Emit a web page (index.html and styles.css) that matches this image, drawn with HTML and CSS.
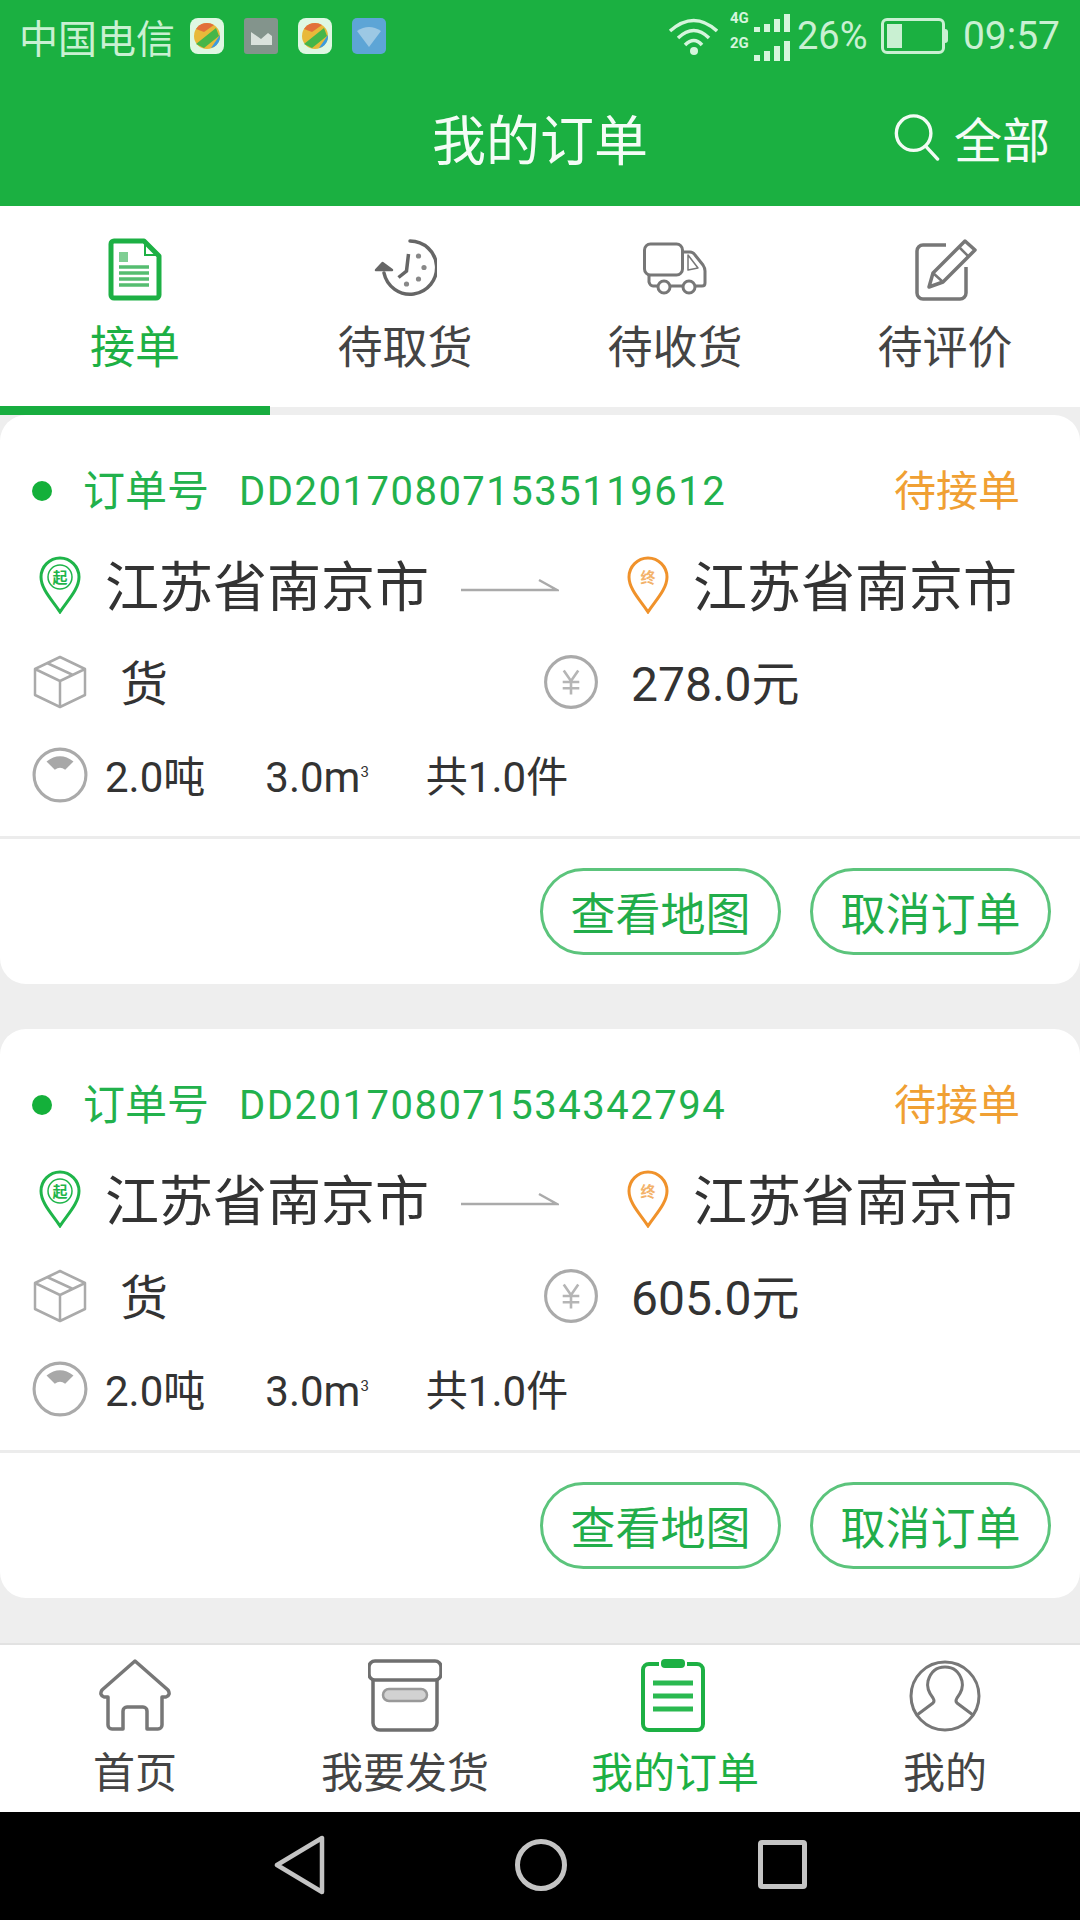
FILE: index.html
```html
<!DOCTYPE html>
<html lang="zh-CN">
<head>
    <meta charset="UTF-8">
    <meta name="viewport" content="width=device-width, initial-scale=1.0">
    <title>我的订单</title>
    <link rel="stylesheet" href="styles.css">
</head>
<body>
    <!-- Shared icons for the order cards -->
    <svg class="icon-defs" aria-hidden="true">
        <symbol id="pin-start" viewBox="0 0 44 58">
            <path d="M22 56 C14 44 3 33 3 21 A19 19 0 0 1 41 21 C41 33 30 44 22 56 Z" fill="none" stroke="#1fb54a" stroke-width="3"/>
            <circle cx="22" cy="21" r="12" fill="none" stroke="#1fb54a" stroke-width="1.5"/>
            <text x="22" y="27" class="pin-text" fill="#1fb54a">起</text>
        </symbol>
        <symbol id="pin-end" viewBox="0 0 44 58">
            <path d="M22 56 C14 44 3 33 3 21 A19 19 0 0 1 41 21 C41 33 30 44 22 56 Z" fill="none" stroke="#f0922b" stroke-width="3"/>
            <text x="22" y="27" class="pin-text" fill="#f3b26a">终</text>
        </symbol>
        <symbol id="box" viewBox="0 0 56 56">
            <path d="M28 3 L53 15 V41 L28 53 L3 41 V15 Z M3 15 L28 27 L53 15 M28 27 V53 M15 9 L41 21" fill="none" stroke="#aaa" stroke-width="2.5" stroke-linejoin="round"/>
        </symbol>
        <symbol id="coin" viewBox="0 0 54 54">
            <circle cx="27" cy="27" r="24.5" fill="none" stroke="#aaa" stroke-width="3"/>
            <path d="M20 16 L27 26 L34 16 M27 26 V39 M19 27 H35 M19 33 H35" fill="none" stroke="#b5b5b5" stroke-width="2.5"/>
        </symbol>
        <symbol id="scale" viewBox="0 0 54 54">
            <circle cx="27" cy="27" r="25" fill="none" stroke="#aaa" stroke-width="3"/>
            <path d="M14 14 Q27 4 40 14 L32 22 Q27 18 22 22 Z" fill="#a8a8a8"/>
        </symbol>
    </svg>

    <div class="top-bar">
        <div class="status-bar">
            <span class="carrier">中国电信</span>
            <svg class="notify-icon" viewBox="0 0 34 36">
                <rect width="34" height="36" rx="8" fill="#dff7e2"/>
                <circle cx="17" cy="18" r="13" fill="#e8b93a"/>
                <path d="M6 11 A13 13 0 0 1 24 7 L14 14 Z" fill="#e2703a"/>
                <path d="M6 26 L26 10 L29 18 L14 30 Z" fill="#45b649"/>
                <path d="M21 30 L30 17 A13 13 0 0 1 24 29 Z" fill="#3a9be0"/>
            </svg>
            <svg class="notify-icon" viewBox="0 0 34 36">
                <rect width="34" height="36" rx="3" fill="#83948c"/>
                <path d="M7 25 L7 14 L17 21 L24 15 L28 18 V27 H7 Z" fill="#d9e2dc"/>
            </svg>
            <svg class="notify-icon" viewBox="0 0 34 36">
                <rect width="34" height="36" rx="8" fill="#dff7e2"/>
                <circle cx="17" cy="18" r="13" fill="#e8b93a"/>
                <path d="M6 11 A13 13 0 0 1 24 7 L14 14 Z" fill="#e2703a"/>
                <path d="M6 26 L26 10 L29 18 L14 30 Z" fill="#45b649"/>
                <path d="M21 30 L30 17 A13 13 0 0 1 24 29 Z" fill="#3a9be0"/>
            </svg>
            <svg class="notify-icon" viewBox="0 0 34 36">
                <rect width="34" height="36" rx="5" fill="#5da5d6"/>
                <path d="M5 13 Q17 5 29 13 L17 29 Z" fill="#9cc8e4"/>
            </svg>
            <span class="status-gap"></span>
            <svg class="wifi" viewBox="0 0 50 40">
                <g fill="none" stroke="#d5f5dc" stroke-width="3.5">
                    <path d="M2 15 Q26 -6 49 15"/>
                    <path d="M10 22 Q26 7 41 22"/>
                    <path d="M17 29 Q26 20 34 29"/>
                </g>
                <circle cx="26" cy="35" r="4" fill="#d5f5dc"/>
            </svg>
            <svg class="signal" viewBox="0 0 60 52">
                <text x="0" y="13" class="net-text">4G</text>
                <text x="0" y="38" class="net-text">2G</text>
                <g fill="#d5f5dc">
                    <rect x="24" y="17" width="6" height="5"/><rect x="34" y="14" width="6" height="8"/><rect x="44" y="9" width="6" height="13"/><rect x="54" y="4" width="6" height="18"/>
                    <rect x="24" y="45" width="6" height="6"/><rect x="34" y="41" width="6" height="10"/><rect x="44" y="36" width="6" height="15"/><rect x="54" y="31" width="6" height="20"/>
                </g>
            </svg>
            <span class="battery-level">26%</span>
            <span class="battery"><span class="battery-fill"></span></span>
            <span class="clock">09:57</span>
        </div>
        <header class="title-bar">
            <h1>我的订单</h1>
            <div class="filter">
                <svg class="search-icon" viewBox="0 0 48 50">
                    <circle cx="21" cy="21" r="18" fill="none" stroke="#f2fbf4" stroke-width="3.5"/>
                    <path d="M34 35 L46 48" stroke="#f2fbf4" stroke-width="3.5" stroke-linecap="round"/>
                </svg>
                <span>全部</span>
            </div>
        </header>
    </div>

    <nav class="tabs">
        <div class="tab active">
            <svg class="tab-icon" viewBox="0 0 64 64">
                <path d="M11 4 H41 L56 19 V58 A3 3 0 0 1 53 61 H11 A3 3 0 0 1 8 58 V7 A3 3 0 0 1 11 4 Z" fill="none" stroke="#1db044" stroke-width="5" stroke-linejoin="round"/>
                <path d="M42 6 V18 H54" fill="none" stroke="#1db044" stroke-width="2"/>
                <rect x="16" y="15" width="9" height="10" fill="#7fce93"/>
                <path d="M16 30 H46 M16 36 H46 M16 42 H46 M16 48 H46" stroke="#55bd70" stroke-width="3.5"/>
            </svg>
            <span>接单</span>
        </div>
        <div class="tab">
            <svg class="tab-icon" viewBox="0 0 64 64">
                <path d="M37 4 A26.6 26.6 0 1 1 11 36" fill="none" stroke="#666" stroke-width="3.5" stroke-linecap="round"/>
                <path d="M9.5 26 L3 33 H19 Z" fill="#666" stroke="#666" stroke-width="2.5" stroke-linejoin="round"/>
                <path d="M35.5 17 L33.5 34 L25.5 40.5" fill="none" stroke="#666" stroke-width="3.5"/>
                <g fill="#888"><circle cx="45.5" cy="19" r="2.6"/><circle cx="51" cy="30.5" r="2.6"/><circle cx="45.5" cy="42" r="2.6"/><circle cx="33.5" cy="47" r="2.6"/></g>
            </svg>
            <span>待取货</span>
        </div>
        <div class="tab">
            <svg class="tab-icon" viewBox="0 0 64 64">
                <g fill="none" stroke="#777" stroke-width="3" stroke-linejoin="round">
                    <rect x="1.5" y="7" width="38" height="31" rx="6"/>
                    <path d="M41 15 H47 Q50 15 52 18 L60 28 Q62 31 62 34 V46 Q62 49 59 49 H53 M39 49 H28 M14 49 H10 Q7 49 6 45 L6 38"/>
                    <path d="M45 18 L55 31 L45 33 Z" stroke-width="1.5"/>
                    <circle cx="21" cy="50" r="6"/>
                    <circle cx="46" cy="50" r="6"/>
                </g>
            </svg>
            <span>待收货</span>
        </div>
        <div class="tab">
            <svg class="tab-icon" viewBox="0 0 64 64">
                <g fill="none" stroke="#777" stroke-width="3.5" stroke-linejoin="round">
                    <path d="M33 8 H10 A6 6 0 0 0 4 14 V56 A6 6 0 0 0 10 62 H47 A6 6 0 0 0 53 56 V30"/>
                    <path d="M16 50 L20 36 L52 4 L62 13 L30 45 Z"/>
                    <path d="M46 10 L56 20 M20 36 L30 45" stroke-width="2.5"/>
                </g>
            </svg>
            <span>待评价</span>
        </div>
    </nav>

    <main class="orders">
        <article class="order-card">
            <div class="order-info">
                <div class="row order-head">
                    <i class="dot"></i>
                    <span class="order-label">订单号</span>
                    <span class="order-no">DD201708071535119612</span>
                    <span class="order-state">待接单</span>
                </div>
                <div class="row route">
                    <svg class="pin"><use href="#pin-start"/></svg>
                    <span class="city">江苏省南京市</span>
                    <svg class="arrow" viewBox="0 0 98 20"><path d="M0 13 H96 L78 3" fill="none" stroke="#aaa" stroke-width="2.5"/></svg>
                    <svg class="pin pin-to"><use href="#pin-end"/></svg>
                    <span class="city">江苏省南京市</span>
                </div>
                <div class="row goods">
                    <div class="goods-name">
                        <svg class="goods-icon"><use href="#box"/></svg>
                        <span class="goods-type">货</span>
                    </div>
                    <svg class="goods-icon"><use href="#coin"/></svg>
                    <span class="price">278.0元</span>
                </div>
                <div class="row amounts">
                    <svg class="goods-icon"><use href="#scale"/></svg>
                    <span>2.0吨</span>
                    <span>3.0m<sup>3</sup></span>
                    <span>共1.0件</span>
                </div>
            </div>
            <div class="order-actions">
                <button class="pill">查看地图</button>
                <button class="pill">取消订单</button>
            </div>
        </article>

        <article class="order-card">
            <div class="order-info">
                <div class="row order-head">
                    <i class="dot"></i>
                    <span class="order-label">订单号</span>
                    <span class="order-no">DD201708071534342794</span>
                    <span class="order-state">待接单</span>
                </div>
                <div class="row route">
                    <svg class="pin"><use href="#pin-start"/></svg>
                    <span class="city">江苏省南京市</span>
                    <svg class="arrow" viewBox="0 0 98 20"><path d="M0 13 H96 L78 3" fill="none" stroke="#aaa" stroke-width="2.5"/></svg>
                    <svg class="pin pin-to"><use href="#pin-end"/></svg>
                    <span class="city">江苏省南京市</span>
                </div>
                <div class="row goods">
                    <div class="goods-name">
                        <svg class="goods-icon"><use href="#box"/></svg>
                        <span class="goods-type">货</span>
                    </div>
                    <svg class="goods-icon"><use href="#coin"/></svg>
                    <span class="price">605.0元</span>
                </div>
                <div class="row amounts">
                    <svg class="goods-icon"><use href="#scale"/></svg>
                    <span>2.0吨</span>
                    <span>3.0m<sup>3</sup></span>
                    <span>共1.0件</span>
                </div>
            </div>
            <div class="order-actions">
                <button class="pill">查看地图</button>
                <button class="pill">取消订单</button>
            </div>
        </article>
    </main>

    <nav class="bottom-nav">
        <div class="nav-item">
            <svg class="nav-icon" viewBox="0 0 74 74">
                <path d="M25 70 H14 A4 4 0 0 1 10 66 V38 H6 Q1 36 4 31 L37 2 L70 31 Q73 36 68 38 H64 V66 A4 4 0 0 1 60 70 H49 V52 A4 4 0 0 0 45 48 H29 A4 4 0 0 0 25 52 Z" fill="none" stroke="#777" stroke-width="3.5" stroke-linejoin="round"/>
            </svg>
            <span>首页</span>
        </div>
        <div class="nav-item">
            <svg class="nav-icon" viewBox="0 0 74 74">
                <g fill="none" stroke="#6f6f6f" stroke-width="3.5">
                    <rect x="1" y="2" width="72" height="19" rx="6"/>
                    <path d="M5 21 V64 A7 7 0 0 0 12 71 H62 A7 7 0 0 0 69 64 V21"/>
                    <rect x="15" y="30" width="44" height="12" rx="6" fill="#d2d2d2" stroke="#999" stroke-width="2.5"/>
                </g>
            </svg>
            <span>我要发货</span>
        </div>
        <div class="nav-item active">
            <svg class="nav-icon" viewBox="0 0 74 74">
                <path d="M21 5 H11 A6 6 0 0 0 5 11 V65 A6 6 0 0 0 11 71 H59 A6 6 0 0 0 65 65 V11 A6 6 0 0 0 59 5 H49" fill="none" stroke="#1db044" stroke-width="4"/>
                <rect x="23" y="0" width="24" height="9" rx="4" fill="#1db044"/>
                <path d="M15 24 H55 M15 37 H55 M15 50 H55" stroke="#2ab950" stroke-width="5"/>
            </svg>
            <span>我的订单</span>
        </div>
        <div class="nav-item">
            <svg class="nav-icon" viewBox="0 0 74 74">
                <g fill="none" stroke="#777" stroke-width="3">
                    <circle cx="37" cy="37" r="34"/>
                    <path d="M9 56 L25 44 Q27 42 25 39 Q18 30 20 22 Q24 8 37 8 Q50 8 54 22 Q56 30 49 39 Q47 42 49 44 L65 56"/>
                </g>
            </svg>
            <span>我的</span>
        </div>
    </nav>

    <div class="system-bar">
        <svg class="sys-back" viewBox="0 0 52 60"><path d="M3 30 L48 3 V57 Z" fill="none" stroke="#c4c4c4" stroke-width="4.5" stroke-linejoin="round"/></svg>
        <span class="sys-home"></span>
        <span class="sys-recent"></span>
    </div>
</body>
</html>
```

FILE: styles.css
```css
* {
    box-sizing: border-box;
}

body {
    margin: 0;
    width: 1080px;
    height: 1920px;
    display: flex;
    flex-direction: column;
    overflow: hidden;
    background: #eeeeee;
    color: #333333;
    font-family: Roboto, "Noto Sans CJK SC", sans-serif;
}

.icon-defs {
    display: none;
}

.pin-text {
    font-size: 15px;
    font-weight: 700;
    text-anchor: middle;
}

.net-text {
    font-size: 15px;
    font-weight: 700;
    fill: #d5f5dc;
}

/* Green top area */
.top-bar {
    height: 206px;
    background: #1bb041;
    flex-shrink: 0;
}

.status-bar {
    height: 72px;
    display: flex;
    align-items: center;
    padding: 0 20px 0 19px;
    color: #c9f0d2;
    font-size: 39px;
}

.carrier {
    width: 171px;
}

.notify-icon {
    width: 34px;
    height: 36px;
    margin-right: 20px;
}

.status-gap {
    flex: 1;
}

.wifi {
    width: 50px;
    height: 40px;
    margin-right: 12px;
}

.signal {
    width: 60px;
    height: 52px;
    margin-right: 7px;
}

.battery-level {
    width: 84px;
    font-size: 38px;
}

.battery {
    position: relative;
    width: 64px;
    height: 36px;
    border: 3px solid #c9f0d2;
    border-radius: 6px;
    margin-right: 16px;
    padding: 3px;
    display: block;
}

/* battery terminal on the right edge */
.battery::after {
    content: "";
    position: absolute;
    right: -6px;
    top: 8px;
    width: 3px;
    height: 14px;
    background: #c9f0d2;
    border-radius: 0 3px 3px 0;
}

.battery-fill {
    display: block;
    width: 15px;
    height: 100%;
    background: #c9f0d2;
}

.clock {
    width: 99px;
    text-align: right;
}

.title-bar {
    position: relative;
    height: 134px;
    display: flex;
    align-items: center;
    justify-content: center;
    color: #f4fcf6;
}

.title-bar h1 {
    margin: 0 0 4px;
    font-size: 54px;
    font-weight: 400;
}

/* sits over the right side of the centered title row */
.filter {
    position: absolute;
    right: 30px;
    top: 0;
    bottom: 4px;
    display: flex;
    align-items: center;
    gap: 14px;
    font-size: 48px;
}

.search-icon {
    width: 47px;
    height: 48px;
}

/* Status tabs */
.tabs {
    height: 209px;
    display: flex;
    flex-shrink: 0;
    background: #fff;
}

.tab {
    flex: 1;
    display: flex;
    flex-direction: column;
    align-items: center;
    padding-top: 31px;
    border-bottom: 8px solid #eeeeee;
    color: #444;
    font-size: 45px;
}

.tab.active {
    color: #1db044;
    border-bottom: 9px solid #18ad3f;
}

.tab-icon {
    width: 64px;
    height: 64px;
    margin-bottom: 18px;
}

.tab span {
    line-height: 60px;
}

/* Order list */
.orders {
    flex: 1;
    overflow: hidden;
    display: flex;
    flex-direction: column;
    gap: 45px;
}

.order-card {
    height: 569px;
    flex-shrink: 0;
    background: #fff;
    border-radius: 26px;
}

.order-info {
    height: 424px;
    padding: 46px 30px 0 32px;
    border-bottom: 3px solid #ececec;
}

.row {
    height: 60px;
    display: flex;
    align-items: center;
    line-height: 60px;
}

/* the row text sits a little under the middle of its icons */
.row span {
    margin-top: 6px;
}

.order-head span {
    margin-top: 2px;
}

.order-head {
    font-size: 42px;
    color: #22b14c;
}

.dot {
    width: 20px;
    height: 20px;
    border-radius: 50%;
    background: #14b03a;
    margin-right: 31px;
}

.order-label {
    width: 156px;
}

.order-no {
    flex: 1;
    font-size: 40px;
    letter-spacing: 1.5px;
}

.order-state {
    color: #f0a033;
    margin-right: 30px;
}

.route {
    margin-top: 34px;
    font-size: 54px;
}

.route .city {
    margin-top: 8px;
}

.pin {
    width: 44px;
    height: 58px;
    margin: 0 23px 0 6px;
}

.pin-to {
    margin-left: 67px;
}

.arrow {
    width: 98px;
    height: 20px;
    margin: 3px 0 0 32px;
}

.goods {
    margin-top: 37px;
    font-size: 48px;
}

.goods-name {
    width: 511px;
    display: flex;
    align-items: center;
}

.goods-icon {
    width: 56px;
    height: 56px;
}

.goods-type {
    margin-left: 32px;
}

.price {
    margin-left: 32px;
}

.amounts {
    margin-top: 33px;
    font-size: 42px;
    gap: 60px;
}

.amounts .goods-icon {
    margin-right: -43px;
}

.amounts sup {
    font-size: 15px;
    line-height: 0;
    margin-right: -3px;
}

.order-actions {
    display: flex;
    justify-content: flex-end;
    gap: 29px;
    padding: 29px 29px 0 0;
}

.pill {
    width: 241px;
    height: 87px;
    padding: 0;
    background: #fff;
    border: 3px solid #5cc47c;
    border-radius: 44px;
    color: #22ad4a;
    font-family: inherit;
    font-size: 45px;
}

/* Bottom navigation */
.bottom-nav {
    height: 169px;
    display: flex;
    flex-shrink: 0;
    background: #fff;
    border-top: 2px solid #e2e2e2;
}

.nav-item {
    flex: 1;
    display: flex;
    flex-direction: column;
    align-items: center;
    padding-top: 14px;
    color: #444;
    font-size: 42px;
}

.nav-item.active {
    color: #1db044;
}

.nav-icon {
    width: 74px;
    height: 74px;
    margin-bottom: 11px;
}

.nav-item span {
    line-height: 60px;
}

/* Android buttons */
.system-bar {
    height: 108px;
    flex-shrink: 0;
    background: #000;
    display: flex;
    align-items: center;
    justify-content: center;
    padding-bottom: 3px;
}

.sys-back {
    width: 52px;
    height: 60px;
    margin-right: 189px;
}

.sys-home {
    width: 52px;
    height: 52px;
    border: 5px solid #c4c4c4;
    border-radius: 50%;
    margin-right: 191px;
}

.sys-recent {
    width: 49px;
    height: 49px;
    border: 5px solid #c4c4c4;
    border-radius: 4px;
}
```
